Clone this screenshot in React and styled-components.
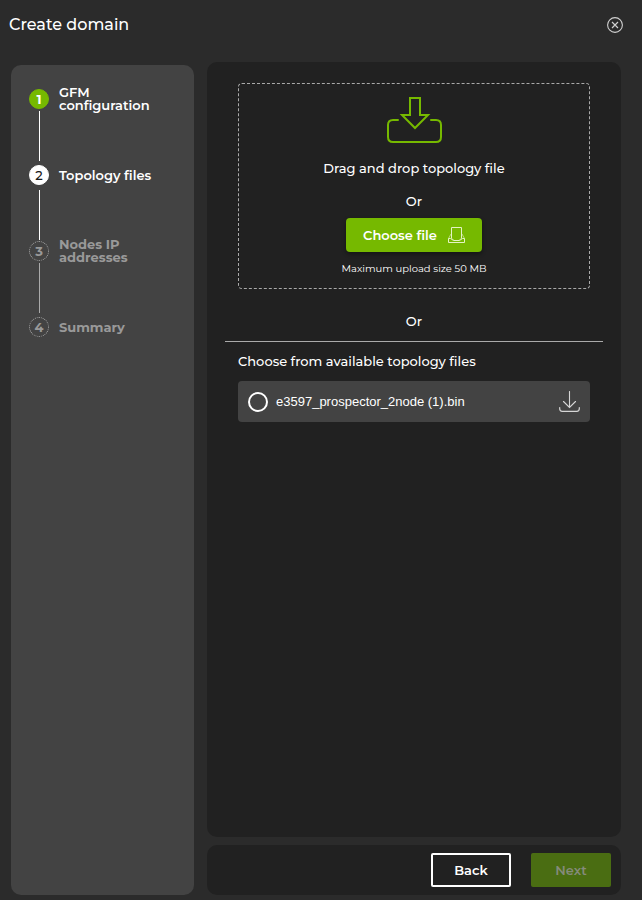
import React, { useState } from 'react';
import styled, { createGlobalStyle } from 'styled-components';

const GlobalStyle = createGlobalStyle`
  * {
    box-sizing: border-box;
  }
  body {
    margin: 0;
    background: #2b2b2b;
    color: #fff;
    font-family: Montserrat, Inter, "Liberation Sans", sans-serif;
    font-size: 13px;
    line-height: 20px;
  }
  button, input {
    font-family: inherit;
  }
`;

const Page = styled.div`
  min-height: 100vh;
  display: flex;
  flex-direction: column;
  background: #2b2b2b;
`;

const Header = styled.header`
  height: 50px;
  padding: 0 19px 0 9px;
  display: flex;
  align-items: center;
  justify-content: space-between;
`;

const Title = styled.h1`
  margin: 0;
  font-size: 16px;
  font-weight: 500;
`;

const CloseButton = styled.button`
  display: flex;
  padding: 0;
  border: none;
  background: none;
  color: #d0d0d0;
  cursor: pointer;
`;

const Body = styled.div`
  flex: 1;
  display: flex;
  gap: 13px;
  padding: 12px 21px 5px 11px;
`;

const Sidebar = styled.nav`
  width: 183px;
  flex-shrink: 0;
  margin-top: 3px;
  padding: 24px 18px;
  border-radius: 10px;
  background: #434343;
`;

const StepList = styled.ol`
  list-style: none;
  margin: 0;
  padding: 0;
`;

const stepColors = {
  done: { bg: '#76b900', border: '#76b900', text: '#fff', label: '#fff', line: '#fff' },
  active: { bg: '#fff', border: '#fff', text: '#1a1a1a', label: '#fff', line: '#fff' },
  pending: { bg: 'transparent', border: '#aaa', text: '#999', label: '#999', line: '#aaa' },
};

const StepItem = styled.li`
  height: 76px;
`;

const StepHead = styled.div`
  height: 20px;
  display: flex;
  align-items: center;
  gap: 10px;
`;

const StepNumber = styled.span`
  width: 20px;
  height: 20px;
  flex-shrink: 0;
  display: flex;
  align-items: center;
  justify-content: center;
  border: 1px ${props => (props.$status === 'pending' ? 'dotted' : 'solid')} ${props => stepColors[props.$status].border};
  border-radius: 50%;
  background: ${props => stepColors[props.$status].bg};
  color: ${props => stepColors[props.$status].text};
  font-weight: ${props => (props.$status === 'active' ? 500 : 700)};
`;

const StepLabel = styled.span`
  max-width: 100px;
  color: ${props => stepColors[props.$status].label};
  font-weight: ${props => (props.$status === 'pending' ? 700 : 600)};
  line-height: 13px;
`;

const StepLine = styled.div`
  width: 1px;
  height: 50px;
  margin: ${props => (props.$status === 'active' ? '5px' : '2px')} 0 0 10px;
  background: ${props => stepColors[props.$status].line};
`;

const Content = styled.div`
  flex: 1;
  min-width: 0;
  display: flex;
  flex-direction: column;
  gap: 8px;
`;

const Panel = styled.main`
  flex: 1;
  padding: 21px 18px;
  border-radius: 10px;
  background: #212121;
`;

const Inset = styled.section`
  margin: 0 13px;
`;

const DropZone = styled.div`
  display: flex;
  flex-direction: column;
  align-items: center;
  padding: 13px 12px 11px;
  border: 1px dashed #aaa;
  border-radius: 4px;
`;

const Text = styled.p`
  margin: ${props => props.$top || 0} 0 0;
  font-weight: 500;
  text-align: center;
`;

const Hint = styled.p`
  margin: 9px 0 0;
  font-size: 10px;
  line-height: 16px;
`;

const ChooseButton = styled.button`
  height: 34px;
  margin-top: 7px;
  padding: 0 17px;
  display: flex;
  align-items: center;
  gap: 11px;
  border: none;
  border-radius: 4px;
  background: #76b900;
  box-shadow: 0 2px 4px rgba(0, 0, 0, .4);
  color: #fff;
  font-size: 13px;
  font-weight: 600;
  cursor: pointer;
`;

const Divider = styled.hr`
  margin: 10px 0 9px;
  border: none;
  border-top: 1px solid #aaa;
`;

const Heading = styled.h2`
  margin: 0 0 10px;
  font-size: 13px;
  font-weight: 500;
`;

const FileRow = styled.div`
  height: 41px;
  padding: 0 10px;
  display: flex;
  align-items: center;
  justify-content: space-between;
  border-radius: 4px;
  background: #434343;
`;

const FileLabel = styled.label`
  display: flex;
  align-items: center;
  gap: 8px;
  font-family: "Liberation Sans", Arial, sans-serif;
`;

const Radio = styled.input`
  appearance: none;
  width: 20px;
  height: 20px;
  margin: 0;
  border: 2px solid #fff;
  border-radius: 50%;
  &:checked {
    background: #76b900;
  }
`;

const IconButton = styled.button`
  display: flex;
  padding: 0;
  border: none;
  background: none;
  color: #d6d6d6;
  cursor: pointer;
`;

const Footer = styled.footer`
  padding: 8px 10px;
  display: flex;
  justify-content: flex-end;
  gap: 20px;
  border-radius: 10px;
  background: #212121;
`;

const ActionButton = styled.button`
  width: 80px;
  height: 34px;
  padding: 0;
  border: ${props => (props.$primary ? 'none' : '2px solid #fff')};
  border-radius: 2px;
  background: ${props => (props.$primary ? '#4a6d12' : 'transparent')};
  color: ${props => (props.$primary ? '#858b7b' : '#fff')};
  font-size: 13px;
  font-weight: 600;
`;

const CloseIcon = () => (
  <svg width="16" height="16" viewBox="0 0 16 16" fill="none" stroke="currentColor" aria-hidden="true">
    <circle cx="8" cy="8" r="7.4" strokeWidth="1.1" />
    <path d="M5 5l6 6M11 5l-6 6" strokeWidth="1.2" />
  </svg>
);

const UploadIcon = () => (
  <svg width="56" height="46" viewBox="-1 0 56 46" fill="none" stroke="#76b900" strokeWidth="2" strokeLinecap="round" aria-hidden="true">
    <path d="M23 1h10v17h8L28 31 15 18h8z" />
    <path d="M11 23H6q-5 0-5 5v12q0 5 5 5h43q5 0 5-5V28q0-5-5-5h-5" />
  </svg>
);

const TrayIcon = () => (
  <svg width="17" height="17" viewBox="0 0 17 17" fill="none" stroke="#e4f3c4" aria-hidden="true">
    <path d="M3.5 11.5V.5h10v11" />
    <path d="M.5 11.5v4h16v-4h-2l-3 2h-6l-3-2z" />
    <path d="M3 7L.5 11.5M14 7l2.500 4.500M3.500 11.500l3 2M13.500 11.500l-3 2" strokeOpacity=".6" />
  </svg>
);

const DownloadIcon = () => (
  <svg width="21" height="21" viewBox="0 0 21 21" fill="none" stroke="currentColor" strokeLinecap="round" aria-hidden="true">
    <path d="M10.5.5v15.5M4.5 10.5l6 6 6-6" strokeWidth="1.1" />
    <path d="M.7 16.5v1.3q0 2.5 2.5 2.5h14.6q2.5 0 2.5-2.5v-1.3" strokeWidth="1.2" />
  </svg>
);

const steps = [
  { label: 'GFM configuration', status: 'done' },
  { label: 'Topology files', status: 'active' },
  { label: 'Nodes IP addresses', status: 'pending' },
  { label: 'Summary', status: 'pending' },
];

const files = ['e3597_prospector_2node (1).bin'];

const App = () => {
  const [selected, setSelected] = useState('');

  return (
    <Page>
      <GlobalStyle />
      <Header>
        <Title>Create domain</Title>
        <CloseButton type="button" aria-label="Close"><CloseIcon /></CloseButton>
      </Header>
      <Body>
        <Sidebar>
          <StepList>
            {steps.map(({ label, status }, index) => (
              <StepItem key={label} aria-current={status === 'active' ? 'step' : undefined}>
                <StepHead>
                  <StepNumber $status={status}>{index + 1}</StepNumber>
                  <StepLabel $status={status}>{label}</StepLabel>
                </StepHead>
                {index < steps.length - 1 && <StepLine $status={status} />}
              </StepItem>
            ))}
          </StepList>
        </Sidebar>
        <Content>
          <Panel>
            <Inset>
              <DropZone>
                <UploadIcon />
                <Text $top="15px">Drag and drop topology file</Text>
                <Text $top="13px">Or</Text>
                <ChooseButton type="button">
                  Choose file
                  <TrayIcon />
                </ChooseButton>
                <Hint>Maximum upload size 50 MB</Hint>
              </DropZone>
              <Text $top="22px">Or</Text>
            </Inset>
            <Divider />
            <Inset>
              <Heading>Choose from available topology files</Heading>
              {files.map(name => (
                <FileRow key={name}>
                  <FileLabel>
                    <Radio
                      type="radio"
                      name="topology"
                      checked={selected === name}
                      onChange={() => setSelected(name)}
                    />
                    {name}
                  </FileLabel>
                  <IconButton type="button" aria-label={`Download ${name}`}><DownloadIcon /></IconButton>
                </FileRow>
              ))}
            </Inset>
          </Panel>
          <Footer>
            <ActionButton type="button">Back</ActionButton>
            <ActionButton type="button" $primary disabled>Next</ActionButton>
          </Footer>
        </Content>
      </Body>
    </Page>
  );
};

export default App;
